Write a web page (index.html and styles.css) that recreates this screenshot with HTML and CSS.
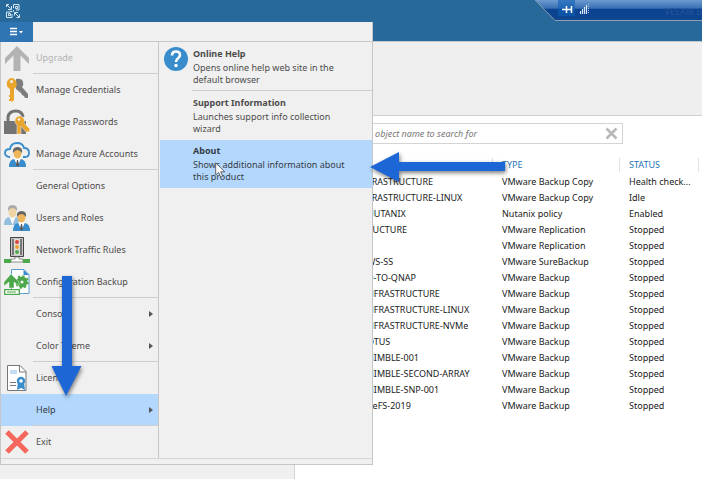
FILE: index.html
```html
<!DOCTYPE html>
<html lang="en">
<head>
  <meta charset="UTF-8">
  <title>Backup Console</title>
  <link rel="stylesheet" href="styles.css">
</head>
<body>
  <header class="titlebar">
    <svg class="logo" width="14" height="14" viewBox="0 0 14 14" fill="none" stroke="#d5e6f3">
      <path d="M.5 3V.5H3M1 1l3.500 3.500M5.500 2v3.500H2M7.500 4V.5h5.500v5.500H10M9.500 2.500h2v2h-2zM4 8H.5v5.500h5.500V10M2.500 9.500h2v2h-2zM8.500 11.500V8.500H12M9 9l4 4M13.500 10.500v3H10.500M4 7.500h2.500M7.500 6v1.500"/>
    </svg>
    <div class="remote-bar">
      <svg width="170" height="22" viewBox="0 0 170 22">
        <defs>
          <linearGradient id="barFill" x1="0" y1="0" x2="0" y2="1">
            <stop offset="0" stop-color="#6c9bd0"/>
            <stop offset=".4" stop-color="#3a70b2"/>
            <stop offset=".45" stop-color="#0c4291"/>
            <stop offset="1" stop-color="#0d4691"/>
          </linearGradient>
        </defs>
        <path d="M0 0l20 20.500h150V0z" fill="url(#barFill)"/>
        <path d="M0 0l20 20.500h150" fill="none" stroke="#8c9dad"/>
        <path d="M23 0h17v16H23z" fill="#0f5fb5" opacity=".6"/>
        <path d="M27 9.500h4M31.500 6v7M36.500 6v7M32 9.500h4" stroke="#fff" stroke-width="1.500"/>
        <path d="M45.500 11v3M47.500 9v5M49.500 7v7M51.500 5v9" stroke="#dce8f5" stroke-width="1.200"/>
        <path d="M53.500 4v10" stroke="#a9c3e2" stroke-dasharray="1 1"/>
      </svg>
      <span class="remote-name">VEEAM B</span>
    </div>
  </header>
  <div class="ribbon"></div>

  <div class="workspace">
    <aside class="nav-pane"></aside>
    <main class="jobs">
      <div class="search">
        <input type="text" aria-label="Search" placeholder="Type in an object name to search for">
        <button class="clear-btn" aria-label="Clear">
          <svg width="13" height="13" viewBox="0 0 13 13"><path d="M1.500 1.500l10 10M11.500 1.500l-10 10" stroke="#b9b9b9" stroke-width="2.600"/></svg>
        </button>
      </div>
      <table class="job-table">
        <colgroup><col class="col-name"><col class="col-type"><col class="col-status"><col></colgroup>
        <thead>
          <tr><th aria-label="Name"></th><th>TYPE</th><th>STATUS</th><th></th></tr>
        </thead>
        <tbody>
          <tr><td>FRASTRUCTURE</td><td>VMware Backup Copy</td><td>Health check...</td></tr>
          <tr><td>FRASTRUCTURE-LINUX</td><td>VMware Backup Copy</td><td>Idle</td></tr>
          <tr><td>NUTANIX</td><td>Nutanix policy</td><td>Enabled</td></tr>
          <tr><td>RUCTURE</td><td>VMware Replication</td><td>Stopped</td></tr>
          <tr><td></td><td>VMware Replication</td><td>Stopped</td></tr>
          <tr><td>WS-SS</td><td>VMware SureBackup</td><td>Stopped</td></tr>
          <tr><td>D-TO-QNAP</td><td>VMware Backup</td><td>Stopped</td></tr>
          <tr><td>NFRASTRUCTURE</td><td>VMware Backup</td><td>Stopped</td></tr>
          <tr><td>NFRASTRUCTURE-LINUX</td><td>VMware Backup</td><td>Stopped</td></tr>
          <tr><td>NFRASTRUCTURE-NVMe</td><td>VMware Backup</td><td>Stopped</td></tr>
          <tr><td>OTUS</td><td>VMware Backup</td><td>Stopped</td></tr>
          <tr><td>NIMBLE-001</td><td>VMware Backup</td><td>Stopped</td></tr>
          <tr><td>NIMBLE-SECOND-ARRAY</td><td>VMware Backup</td><td>Stopped</td></tr>
          <tr><td>NIMBLE-SNP-001</td><td>VMware Backup</td><td>Stopped</td></tr>
          <tr><td>ReFS-2019</td><td>VMware Backup</td><td>Stopped</td></tr>
        </tbody>
      </table>
    </main>
  </div>

  <!-- main menu -->
  <div class="app-menu">
    <div class="menu-head">
      <button class="file-btn" aria-label="Menu">
        <svg width="14" height="10" viewBox="0 0 14 10"><path d="M0 1.500h7M0 4.500h7M0 7.500h7" stroke="#fff" stroke-width="1.500"/><path d="M9 4h4l-2 2.500z" fill="#fff"/></svg>
      </button>
    </div>
    <div class="menu-body">
      <nav class="menu-list">
        <button class="menu-item disabled sep" disabled>
          <svg class="icon" viewBox="0 0 26 26"><path d="M13 1l12 12v6l-8.500-8.500V26h-7V10.500L1 19v-6z" fill="#b3b3b3"/></svg>
          <span>Upgrade</span>
        </button>
        <button class="menu-item">
          <svg class="icon" viewBox="0 0 26 26">
            <path d="M12 2q6-1 7 3 1 3-1 5l6 7v4h-3l-1-2-2-1-1-2-5-4z" fill="#7c7c7c"/>
            <path d="M7 1a6 6 0 0 1 3 11v11l-2 2-2-2V12A6 6 0 0 1 7 1z" fill="#e9a52c"/>
            <path d="M5 19h3M5 23h3" stroke="#e9a52c" stroke-width="2"/>
            <circle cx="7.500" cy="4.500" r="1.500" fill="#f0f0f0"/>
          </svg>
          <span>Manage Credentials</span>
        </button>
        <button class="menu-item">
          <svg class="icon" viewBox="0 0 26 26">
            <path d="M4 12V8q1-6 8-6 6 0 7 6" fill="none" stroke="#747474" stroke-width="3"/>
            <path d="M0 12h22v13H0z" fill="#747474"/>
            <path d="M15 7a5 5 0 0 1 5 7l6 6-1 3h-3l-5-6v8h-4v-9a5 5 0 0 1 2-9z" fill="#e9a52c" stroke="#f0f0f0" stroke-width=".5"/>
            <circle cx="15" cy="10.500" r="1.300" fill="#f0f0f0"/>
          </svg>
          <span>Manage Passwords</span>
        </button>
        <button class="menu-item sep">
          <svg class="icon" viewBox="0 0 26 26">
            <path d="M6 16H5Q1 15 1 12q0-4 5-4 1-6 7-6 6 0 7 5 5 0 5 5 0 4-4 4h-2" fill="#f0f0f0" stroke="#398dcc" stroke-width="1.800"/>
            <path d="M5 26q0-8 6-8h5q6 0 6 8z" fill="#398dcc"/><path d="M10 17h7l-3.500 9z" fill="#fff"/><path d="M13 19h1l1 5-1.500 2-1.500-2z" fill="#555"/>
            <ellipse cx="13.500" cy="12" rx="4" ry="5.500" fill="#eeb75b"/><path d="M9 12q-1-6 4.500-6t4.500 6q-2-3-4.500-3T9 12" fill="#666"/>
          </svg>
          <span>Manage Azure Accounts</span>
        </button>
        <button class="menu-item"><span class="icon"></span><span>General Options</span></button>
        <button class="menu-item">
          <svg class="icon" viewBox="0 0 26 26">
            <g opacity=".5"><path d="M0 20q0-8 6-8h5q6 0 6 8z" fill="#398dcc"/><path d="M5 11h7l-3.500 9z" fill="#fff"/><ellipse cx="8.500" cy="7" rx="4" ry="5.500" fill="#eeb75b"/><path d="M4 6q-1-6 4.500-6T13 6q-2-3-4.500-3T4 6" fill="#666"/></g>
            <path d="M9 26q0-8 6-8h5q6 0 6 8z" fill="#398dcc"/><path d="M14 17h7l-3.500 9z" fill="#fff"/><path d="M17 19h1l1 5-1.500 2-1.500-2z" fill="#555"/>
            <ellipse cx="17.500" cy="12" rx="4" ry="5.500" fill="#eeb75b"/><path d="M13 12q-1-6 4.500-6t4.500 6q-2-3-4.500-3T13 12" fill="#666"/>
          </svg>
          <span>Users and Roles</span>
        </button>
        <button class="menu-item">
          <svg class="icon" viewBox="0 0 26 26">
            <path d="M6.500.5h13v19h-13z" fill="#777" stroke="#444"/><path d="M7.500 1.500h11v17h-11z" fill="none" stroke="#ddd" stroke-width=".8"/>
            <path d="M10 2h6v16h-6z" fill="#ddd"/>
            <circle cx="13" cy="5" r="2" fill="#df4438"/><circle cx="13" cy="10" r="2" fill="#eea22c"/><circle cx="13" cy="15" r="2" fill="#4ca84a"/>
            <path d="M11 20h4v2h4v3H7v-3h4z" fill="#fff" stroke="#777" stroke-width=".8"/><path d="M0 22h7v4H0zM19 22h7v4h-7z" fill="#4ca84a"/>
          </svg>
          <span>Network Traffic Rules</span>
        </button>
        <button class="menu-item sep">
          <svg class="icon" viewBox="0 0 26 26">
            <path d="M7.500.5H20l5 5v19H7.500z" fill="#fff" stroke="#5c9dd0"/><path d="M19.500.5l5.500 5.500h-5.500z" fill="#398dcc"/>
            <circle cx="18" cy="13" r="3.500" fill="none" stroke="#4ca84a" stroke-width="4"/><circle cx="18" cy="13" r="5.800" fill="none" stroke="#4ca84a" stroke-width="2" stroke-dasharray="2.200 2.300"/>
            <path d="M7 5l8 8v4l-5-4v6H5v-6l-5 4v-4z" fill="#4ca84a" stroke="#fff" stroke-width=".4"/>
            <path d="M.7 20.700h14.600v4.600H.7z" fill="#fff" stroke="#4ca84a" stroke-width="1.300"/><path d="M3 23h9" stroke="#4ca84a"/>
          </svg>
          <span>Configuration Backup</span>
        </button>
        <button class="menu-item more"><span class="icon"></span><span>Console</span></button>
        <button class="menu-item more sep"><span class="icon"></span><span>Color Theme</span></button>
        <button class="menu-item">
          <svg class="icon" viewBox="0 0 26 26">
            <path d="M3.500.5H16l6 6v19H3.500z" fill="#fff" stroke="#777"/><path d="M15.500.5v6.500h6.500" fill="none" stroke="#777"/>
            <path d="M6 5h7v4H6z" fill="#c5daf5"/><path d="M6 17.500h6M6 20.500h6" stroke="#777"/>
            <path d="M14 17l-1 8 4-2 4 2-1-8z" fill="#398dcc"/><circle cx="17" cy="16" r="3" fill="#fff" stroke="#398dcc" stroke-width="2.400"/>
          </svg>
          <span>License</span>
        </button>
        <button class="menu-item more active sep"><span class="icon"></span><span>Help</span></button>
        <button class="menu-item">
          <svg class="icon" viewBox="0 0 26 26"><path d="M3 3l20 20M23 3L3 23" stroke="#f4675c" stroke-width="5"/></svg>
          <span>Exit</span>
        </button>
      </nav>
      <div class="submenu">
        <button class="sub-item">
          <svg class="help-icon" width="24" height="24" viewBox="0 0 24 24"><circle cx="12" cy="12" r="12" fill="#398dcc"/><path d="M8 8.500q0-4 4-4t4 3.500q0 2-2 3.300T12 15" fill="none" stroke="#fff" stroke-width="2.600"/><circle cx="12" cy="18.500" r="1.700" fill="#fff"/></svg>
          <span class="sub-text"><strong>Online Help</strong><span>Opens online help web site in the default browser</span></span>
        </button>
        <button class="sub-item">
          <span class="sub-text"><strong>Support Information</strong><span>Launches support info collection wizard</span></span>
        </button>
        <button class="sub-item active">
          <span class="sub-text"><strong>About</strong><span>Shows additional information about this product</span></span>
        </button>
      </div>
    </div>
  </div>

  <!-- pointers -->
  <svg class="pointer pointer-down" width="30" height="120" viewBox="0 0 30 120"><path d="M10 0h10v90h9.500L14 120-.5 90H10z" fill="#1d66d6"/></svg>
  <svg class="pointer pointer-left" width="135" height="30" viewBox="0 0 135 30"><path d="M0 15L29 0v10h106v9H29v11z" fill="#1d66d6"/></svg>
  <svg class="cursor" width="11" height="16" viewBox="0 0 11 16"><path d="M.7.900v12l3-2.500 2 4.800 2-.9-2-4.500h4z" fill="#fff" stroke="#444" stroke-width=".8"/></svg>
</body>
</html>
```
FILE: styles.css
```css
* {
  box-sizing: border-box;
}
body {
  margin: 0;
  min-height: 100vh;
  display: flex;
  flex-direction: column;
  position: relative;
  overflow: hidden;
  background: #f0f0f0;
  color: #1a1a1a;
  font-family: "Noto Sans", "Open Sans", sans-serif;
  font-size: 9px;
  line-height: 12px;
}
button, input {
  font: inherit;
  color: inherit;
  border: none;
  background: none;
  padding: 0;
  margin: 0;
}

/* title bar */
.titlebar {
  height: 41px;
  background: #27699a;
  padding: 4px 6px;
}
.logo {
  display: block;
}
.remote-bar {
  position: absolute;
  top: 0;
  right: 0;
  width: 167px;
  height: 22px;
  overflow: hidden;
}
.remote-name {
  position: absolute;
  right: 0;
  top: 6px;
  color: #23549b;
  white-space: nowrap;
}
.ribbon {
  height: 75px;
  border-top: 1px solid #c8c8c8;
  border-bottom: 1px solid #d0d0d0;
  background: #efefef;
}

/* workspace */
.workspace {
  flex: 1;
  display: flex;
}
.nav-pane {
  flex: 0 0 295px;
  border-right: 1px solid #d4d4d4;
}
.jobs {
  flex: 1;
  min-width: 0;
  background: #fff;
  padding: 7px 0 0 8px;
}
.search {
  display: flex;
  align-items: center;
  width: 320px;
  height: 21px;
  border: 1px solid #d4d4d4;
  padding: 0 4px 0 28px;
}
.search input {
  flex: 1;
  outline: none;
  font-style: italic;
}
.search input::placeholder {
  color: #777;
  opacity: 1;
}
.clear-btn {
  display: flex;
}
.job-table {
  width: 100%;
  margin-top: 12px;
  table-layout: fixed;
  border-collapse: collapse;
}
.col-name {
  width: 190px;
}
.col-type {
  width: 127px;
}
.col-status {
  width: 79px;
}
.job-table th {
  height: 18px;
  padding: 0 0 0 9px;
  font-weight: normal;
  text-align: left;
  color: #1f74b5;
  background: linear-gradient(#e2e2e2, #e2e2e2) right center / 1px 14px no-repeat;
}
.job-table th:last-child {
  background: none;
}
.job-table td {
  height: 16px;
  padding: 0 0 0 9px;
  white-space: nowrap;
}
.job-table td:first-child {
  padding-left: 64px;
}

/* main menu */
.app-menu {
  position: absolute;
  top: 22px;
  left: 0;
  width: 373px;
  background: #f0f0f0;
  border: 1px solid #c6c6c6;
  border-top: none;
  padding-bottom: 5px;
  color: #4c4c4c;
}
.menu-head {
  height: 20px;
  border-bottom: 1px solid #c8c8c8;
}
.file-btn {
  display: flex;
  align-items: center;
  justify-content: center;
  width: 33px;
  height: 20px;
  margin-left: -1px;
  background: #2f75b3;
}
.menu-body {
  display: flex;
  border-bottom: 1px solid #d6d6d6;
}
.menu-list {
  width: 158px;
  border-right: 1px solid #c6c6c6;
}
.menu-item {
  display: flex;
  align-items: center;
  gap: 6px;
  width: 100%;
  height: 32px;
  padding-left: 3px;
  text-align: left;
  position: relative;
}
.menu-item .icon {
  width: 26px;
  height: 26px;
}
.menu-item.disabled {
  color: #b3b3b3;
}
.menu-item.sep::after {
  content: "";
  position: absolute;
  left: 32px;
  right: 0;
  bottom: 0;
  border-bottom: 1px solid #cdcdcd;
}
.menu-item.more::before {
  content: "";
  position: absolute;
  right: 5px;
  border: 3px solid transparent;
  border-left: 4px solid #555;
  border-right: none;
}
.menu-item.active,
.sub-item.active {
  background: #b3d7fd;
  color: #343c46;
}

/* help submenu */
.submenu {
  flex: 1;
  padding-left: 1px;
}
.sub-item {
  display: block;
  width: 100%;
  padding: 6px 0 5px 33px;
  text-align: left;
  position: relative;
}
.sub-item:first-child::after {
  content: "";
  position: absolute;
  left: 32px;
  right: 0;
  bottom: 0;
  border-bottom: 1px solid #cdcdcd;
}
.sub-item.active {
  padding: 5px 0;
  padding-left: 33px;
}
.help-icon {
  position: absolute;
  left: 4px;
  top: 5px;
}
.sub-text {
  display: flex;
  flex-direction: column;
  gap: 2px;
  max-width: 160px;
}

/* pointers */
.pointer {
  position: absolute;
  overflow: visible;
  filter: drop-shadow(1px 2px 2px rgba(0,0,0,0.5));
}
.pointer-down {
  left: 52px;
  top: 276px;
}
.pointer-left {
  left: 370px;
  top: 152px;
}
.cursor {
  position: absolute;
  left: 215px;
  top: 162px;
}
```
